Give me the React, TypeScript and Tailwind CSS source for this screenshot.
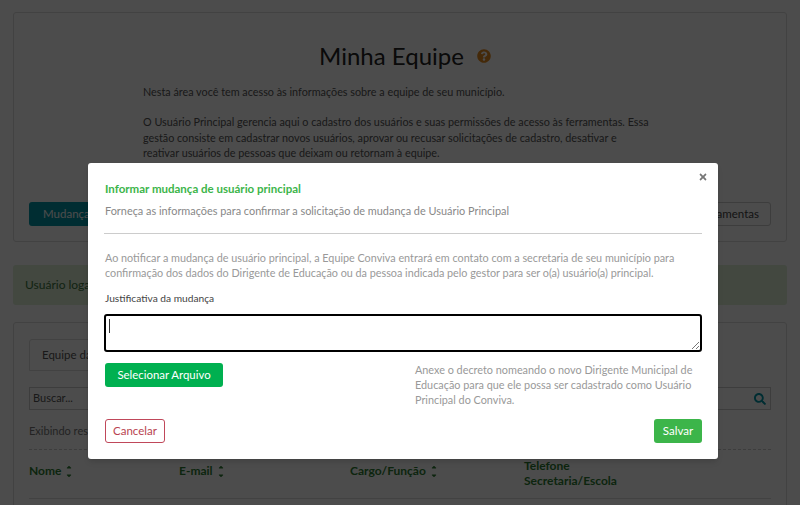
import { FaQuestionCircle, FaSearch, FaTimes, FaSortUp, FaSortDown } from "react-icons/fa";

const SortHead = ({ label, width }: { label: string; width: string }) => (
    <div className={`${width} flex items-center gap-[4px] -mt-[6px] font-bold text-[#2e7d32] text-[12px]`}>
        {label}
        <span className="relative w-[7px] h-[13px] text-[8px]">
            <FaSortUp className="absolute top-0 left-0" />
            <FaSortDown className="absolute bottom-0 left-0" />
        </span>
    </div>
);

const App = () => {
    return (
        <div className="relative w-[800px] h-[505px] overflow-hidden bg-white text-[#555] font-['Lato','Open_Sans',sans-serif]">
            <div className="px-[13px] pt-[12px]">
                <div className="h-[230px] border border-[#ddd] rounded-[3px] flex flex-col px-[15px]">
                    <div className="flex justify-center items-center gap-[13px] mt-[25px] ml-[10px]">
                        <h1 className="text-[24px] leading-[36px] font-normal text-[#222]">Minha Equipe</h1>
                        <FaQuestionCircle className="text-[14px] text-[#e58a1f]" />
                    </div>
                    <div className="ml-[114px] w-[512px] mt-[10px] text-[10.8px] leading-[15.4px] text-[#555]">
                        <p>Nesta área você tem acesso às informações sobre a equipe de seu município.</p>
                        <p className="mt-[15px]">
                            O Usuário Principal gerencia aqui o cadastro dos usuários e suas permissões de acesso às ferramentas. Essa gestão consiste em cadastrar novos usuários, aprovar ou recusar solicitações de cadastro, desativar e reativar usuários de pessoas que deixam ou retornam à equipe.
                        </p>
                    </div>
                    <div className="flex justify-between items-center mt-auto mb-[15px]">
                        <button className="h-[24px] w-[120px] pl-[14px] text-left rounded-[3px] bg-[#0097a7] text-white text-[11.5px]">Mudança</button>
                        <button className="h-[24px] w-[120px] pr-[11px] text-right rounded-[3px] border border-[#ccc] text-[#444] text-[11.5px]">ramentas</button>
                    </div>
                </div>
                <div className="mt-[23px] h-[40px] bg-[#dff0d8] rounded-[3px] flex items-center pl-[12px] text-[12px] text-[#3c763d]">
                    Usuário logado
                </div>
                <div className="mt-[17px] h-[200px] border border-[#ddd] rounded-[3px] px-[15px]">
                    <div className="mt-[16px] w-[130px] h-[32px] pl-[12px] flex items-center border border-[#ddd] rounded-t-[3px] text-[11.5px] text-[#555]">Equipe da</div>
                    <div className="mt-[16px] h-[23px] border border-[#ccc] flex items-center justify-between px-[3px] text-[11px]">
                        <span>Buscar...</span>
                        <FaSearch className="text-[12px] text-[#0097a7] mr-[1px]" />
                    </div>
                    <div className="mt-[13px] text-[11px] leading-[16px] text-[#777]">Exibindo resultados</div>
                    <div className="mt-[10px] border-t border-dashed border-[#ccc] flex items-center h-[49px]">
                        <SortHead label="Nome" width="w-[150px]" />
                        <SortHead label="E-mail" width="w-[171px]" />
                        <SortHead label="Cargo/Função" width="w-[174px]" />
                        <div className="font-bold text-[#2e7d32] text-[12px] leading-[15px] -mt-[3px]">
                            Telefone<br />Secretaria/Escola
                        </div>
                    </div>
                    <div className="border-t border-[#ddd]"></div>
                </div>
            </div>

            <div className="absolute inset-0 bg-black/70"></div>

            <div className="absolute left-[88px] top-[163px] w-[630px] h-[296px] bg-white rounded-[3px] shadow-md px-[16px] pt-[18px]">
                <FaTimes className="absolute top-[9px] right-[10px] text-[10px] text-[#777]" />
                <h2 className="text-[11.5px] leading-[16px] font-bold text-[#3cb54a] pl-px">Informar mudança de usuário principal</h2>
                <p className="mt-[6px] text-[10.9px] leading-[16px] text-[#888] pl-px">Forneça as informações para confirmar a solicitação de mudança de Usuário Principal</p>
                <div className="mt-[14px] border-t border-[#ccc]"></div>
                <p className="mt-[16px] text-[10.8px] leading-[15px] text-[#999] pl-px">
                    Ao notificar a mudança de usuário principal, a Equipe Conviva entrará em contato com a secretaria de seu município para confirmação dos dados do Dirigente de Educação ou da pessoa indicada pelo gestor para ser o(a) usuário(a) principal.
                </p>
                <label className="block mt-[11px] text-[10.2px] leading-[15px] font-normal text-[#444] pl-px">Justificativa da mudança</label>
                <div className="relative mt-[8px] h-[38px] border-2 border-black rounded-[3px]">
                    <span className="absolute left-[3px] top-[3px] w-px h-[14px] bg-[#333]"></span>
                    <svg className="absolute right-0 bottom-0" width="9" height="9" viewBox="0 0 9 9">
                        <path d="M1 8 8 1M5 8 8 5" stroke="#777" strokeWidth="1" fill="none" />
                    </svg>
                </div>
                <div className="mt-[11px] flex items-start justify-between">
                    <button className="h-[24px] w-[118px] ml-px rounded-[3px] bg-[#00b050] text-white text-[11.4px]">Selecionar Arquivo</button>
                    <p className="w-[287px] -mt-[1px] text-[10.85px] leading-[15px] text-[#999]">
                        Anexe o decreto nomeando o novo Dirigente Municipal de Educação para que ele possa ser cadastrado como Usuário Principal do Conviva.
                    </p>
                </div>
                <div className="mt-[12px] flex items-center justify-between">
                    <button className="h-[24px] w-[60px] ml-px rounded-[3px] border border-[#c0485a] text-[#b8434f] text-[11.5px]">Cancelar</button>
                    <button className="h-[24px] w-[48px] rounded-[3px] bg-[#3cb54a] text-white text-[11.5px]">Salvar</button>
                </div>
            </div>
        </div>
    );
};

export default App;
